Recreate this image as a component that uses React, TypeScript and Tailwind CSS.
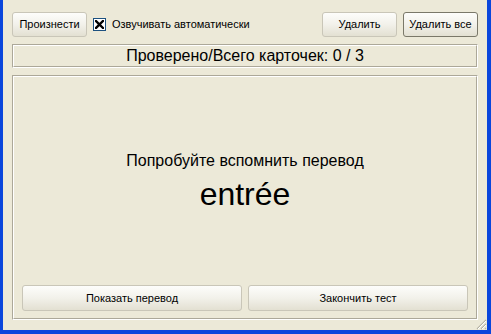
import React from "react";

const font = { fontFamily: '"Liberation Sans", Arial, sans-serif' };

function XpButton({ label, className = "", dark = false }: { label: string; className?: string; dark?: boolean }) {
  return (
    <div
      className={`flex items-center justify-center rounded-[3px] border bg-gradient-to-b from-[#FDFDFB] via-[#F2F1EA] to-[#E3E0D2] text-[11px] text-black ${
        dark ? "border-[#7A7869]" : "border-[#C9C6B8]"
      } ${className}`}
    >
      {label}
    </div>
  );
}

function Etched({ className = "", children }: { className?: string; children?: React.ReactNode }) {
  return (
    <div className={`border border-t-[#ACA899] border-l-[#ACA899] border-b-white border-r-white ${className}`}>
      <div className="flex h-full w-full flex-col border border-t-white border-l-white border-b-[#ACA899] border-r-[#ACA899]">
        {children}
      </div>
    </div>
  );
}

export default function App() {
  return (
    <div style={font} className="h-[334px] w-[491px] bg-[#0A46DC] pb-[4px] pl-[3px] pr-[4px]">
      <div className="relative flex h-full w-full flex-col bg-[#ECE9D8] pb-[10px] pl-[9px] pr-[9px] pt-[12px]">
        <div className="flex h-[25px] items-center">
          <XpButton label="Произнести" className="h-[25px] w-[75px]" />
          <div className="ml-[6px] flex items-center">
            <div className="flex h-[13px] w-[13px] items-center justify-center border border-[#1C5180] bg-white">
              <svg width="9" height="9" viewBox="0 0 9 9">
                <path d="M1 1 L8 8 M8 1 L1 8" stroke="black" strokeWidth="2.4" strokeLinecap="square" />
              </svg>
            </div>
            <span className="ml-[6px] text-[11px] text-black">Озвучивать автоматически</span>
          </div>
          <div className="flex-1" />
          <XpButton label="Удалить" className="h-[25px] w-[75px]" />
          <XpButton label="Удалить все" dark className="ml-[6px] h-[25px] w-[75px]" />
        </div>
        <Etched className="mt-[7px] h-[24px]">
          <div className="flex h-full items-center justify-center text-[16px] text-black">
            Проверено/Всего карточек: 0 / 3
          </div>
        </Etched>
        <Etched className="mt-[7px] flex-1">
          <div className="flex flex-1 flex-col items-center justify-center">
            <div className="text-[16px] leading-[18px] text-black">Попробуйте вспомнить перевод</div>
            <div className="mt-[8px] text-[32px] leading-[32px] text-black">entrée</div>
          </div>
          <div className="flex gap-[6px] px-[8px] pb-[7px]">
            <XpButton label="Показать перевод" className="h-[26px] flex-1" />
            <XpButton label="Закончить тест" className="h-[26px] flex-1" />
          </div>
        </Etched>
        <svg className="absolute bottom-0 right-0" width="13" height="13" viewBox="0 0 13 13">
          <path d="M12 3 L3 12 M12 7 L7 12 M12 11 L11 12" stroke="#B5B2A3" strokeWidth="1.2" />
          <path d="M12 4 L4 12 M12 8 L8 12" stroke="white" strokeWidth="1" />
        </svg>
      </div>
    </div>
  );
}
